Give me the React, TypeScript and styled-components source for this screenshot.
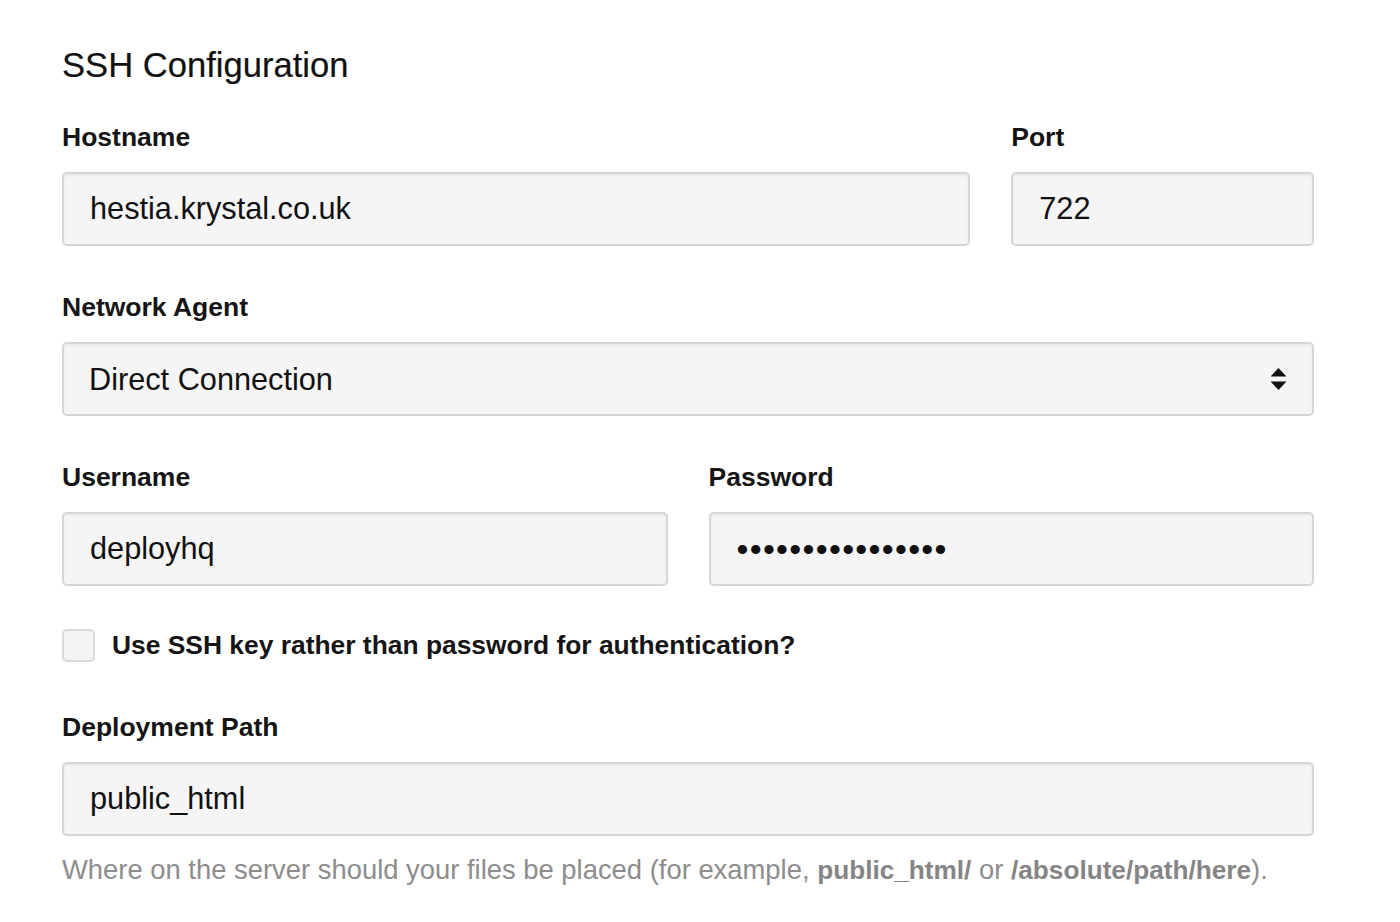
import React from 'react';
import styled, { createGlobalStyle } from 'styled-components';

const GlobalStyle = createGlobalStyle`
  html, body {
    margin: 0;
    padding: 0;
    background: #ffffff;
  }
  body {
    font-family: "Liberation Sans", Arial, Helvetica, sans-serif;
    color: #111111;
  }
`;

const StyledPage = styled.main`
  padding: 45px 86px 40px 62px;
  width: 1252px;
`;

const StyledHeading = styled.h2`
  margin: 0 0 34px;
  font-size: 34.6px;
  line-height: 40px;
  font-weight: 400;
  color: #111111;
  -webkit-text-stroke: 0.2px #111111;
`;

const StyledRow = styled.div<{ $columns: string }>`
  display: grid;
  grid-template-columns: ${(p) => p.$columns};
  column-gap: 41px;
`;

const StyledField = styled.div`
  margin-bottom: 43px;
`;

const StyledLabel = styled.label`
  display: block;
  font-size: 26.5px;
  line-height: 36px;
  font-weight: 700;
  color: #151515;
  margin-bottom: 17px;
`;

const StyledInput = styled.input`
  box-sizing: border-box;
  display: block;
  width: 100%;
  height: 74px;
  padding: 0 26px;
  border: 2px solid #d6d6d6;
  border-radius: 5px;
  background: #f5f5f5;
  box-shadow: inset 0 2px 3px rgba(0, 0, 0, 0.05);
  font-family: inherit;
  font-size: 30.7px;
  color: #111111;
  outline: none;

  &[type='password'] {
    letter-spacing: 1.3px;
    font-size: 34px;
  }
`;

const StyledSelectBox = styled.div`
  position: relative;
`;

const StyledSelect = styled.select`
  box-sizing: border-box;
  display: block;
  width: 100%;
  height: 74px;
  padding: 0 25px;
  border: 2px solid #d6d6d6;
  border-radius: 5px;
  background: #f5f5f5;
  box-shadow: inset 0 2px 3px rgba(0, 0, 0, 0.05);
  font-family: inherit;
  font-size: 30.7px;
  color: #111111;
  appearance: none;
  -webkit-appearance: none;
  outline: none;
`;

const StyledArrows = styled.svg`
  position: absolute;
  right: 27px;
  top: 50%;
  transform: translateY(-50%);
  pointer-events: none;
`;

const StyledCheckRow = styled.label`
  display: flex;
  align-items: center;
  gap: 17px;
  height: 33px;
  margin: 0 0 47px;
  font-size: 26.4px;
  font-weight: 700;
  color: #151515;
  cursor: pointer;
`;

const StyledCheckbox = styled.input`
  appearance: none;
  -webkit-appearance: none;
  box-sizing: border-box;
  margin: 0;
  width: 33px;
  height: 33px;
  border: 2px solid #d9d9d9;
  border-radius: 5px;
  background: #f5f5f5;
  flex: none;
`;

const StyledHelp = styled.p`
  margin: 16px 0 0;
  font-size: 27.4px;
  line-height: 36px;
  color: #8d8d8d;

  & strong {
    font-size: 26.2px;
    font-weight: 700;
    color: #858585;
  }
`;

const App: React.FC = () => {
  return (
    <StyledPage>
      <GlobalStyle />
      <StyledHeading>SSH Configuration</StyledHeading>

      <StyledRow $columns="3fr 1fr">
        <StyledField>
          <StyledLabel htmlFor="hostname">Hostname</StyledLabel>
          <StyledInput id="hostname" type="text" defaultValue="hestia.krystal.co.uk" />
        </StyledField>
        <StyledField>
          <StyledLabel htmlFor="port">Port</StyledLabel>
          <StyledInput id="port" type="text" defaultValue="722" />
        </StyledField>
      </StyledRow>

      <StyledField>
        <StyledLabel htmlFor="agent">Network Agent</StyledLabel>
        <StyledSelectBox>
          <StyledSelect id="agent" defaultValue="direct">
            <option value="direct">Direct Connection</option>
          </StyledSelect>
          <StyledArrows width="17" height="24" viewBox="0 0 17 24">
            <path d="M8.5 1 L16.5 9.5 L0.5 9.5 Z" fill="#111" />
            <path d="M0.5 14.5 L16.5 14.5 L8.5 23 Z" fill="#111" />
          </StyledArrows>
        </StyledSelectBox>
      </StyledField>

      <StyledRow $columns="1fr 1fr">
        <StyledField>
          <StyledLabel htmlFor="username">Username</StyledLabel>
          <StyledInput id="username" type="text" defaultValue="deployhq" />
        </StyledField>
        <StyledField>
          <StyledLabel htmlFor="password">Password</StyledLabel>
          <StyledInput id="password" type="password" defaultValue="krystalpassword1" />
        </StyledField>
      </StyledRow>

      <StyledCheckRow>
        <StyledCheckbox type="checkbox" />
        Use SSH key rather than password for authentication?
      </StyledCheckRow>

      <div>
        <StyledLabel htmlFor="path">Deployment Path</StyledLabel>
        <StyledInput id="path" type="text" defaultValue="public_html" />
        <StyledHelp>
          Where on the server should your files be placed (for example, <strong>public_html/</strong> or{' '}
          <strong>/absolute/path/here</strong>).
        </StyledHelp>
      </div>
    </StyledPage>
  );
};

export default App;
